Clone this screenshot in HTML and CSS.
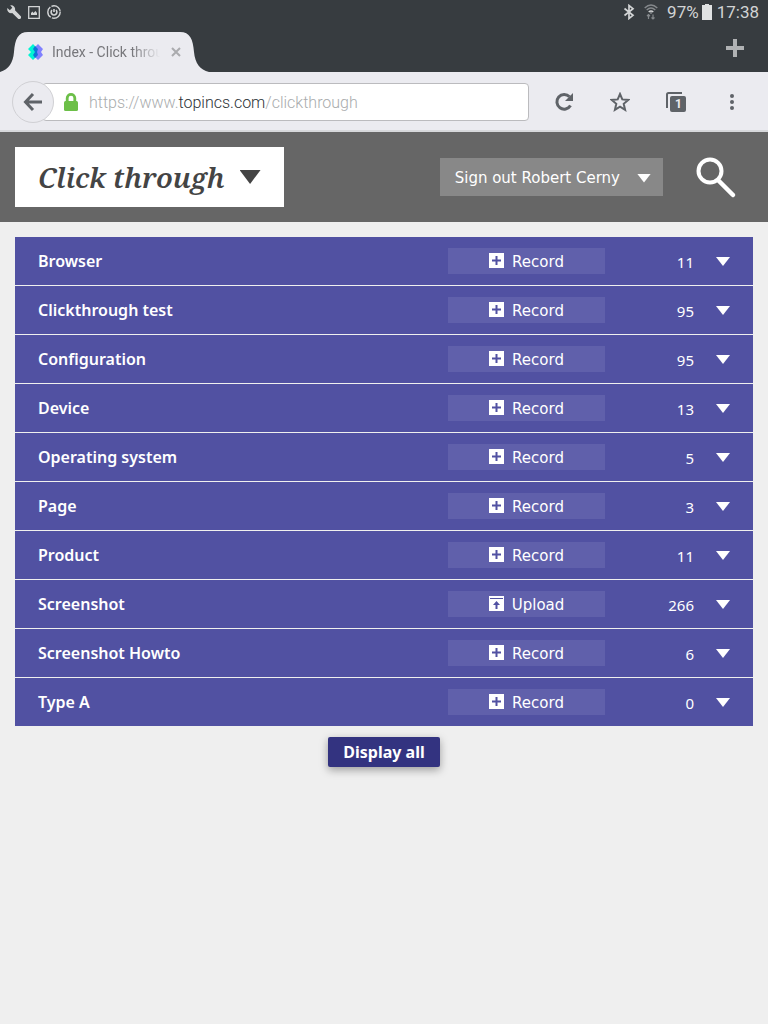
FILE: index.html
```
<!DOCTYPE html>
<html lang="en">
<head>
    <meta charset="UTF-8">
    <meta name="viewport" content="width=device-width, initial-scale=1.0">
    <title>Index - Click through</title>
    <link rel="stylesheet" href="styles.css">
</head>
<body>
    <div class="browser">
        <div class="status-bar">
            <div class="status-left">
                <svg width="14" height="14" viewBox="0 0 14 14"><path fill="#d2d4d5" d="M3.2 0.3A4 4 0 0 1 8 5.2L13.6 10.9A1.9 1.9 0 0 1 10.9 13.6L5.2 8A4 4 0 0 1 0.4 3L2.8 5.3L5.3 2.8Z"/></svg>
                <svg width="12" height="13" viewBox="0 0 12 13"><path fill="none" stroke="#d2d4d5" stroke-width="1.3" d="M.7 .7H11.3V12.3H.7Z"/><path fill="#d2d4d5" d="M3 9V7L4.5 5.5L5.5 7L7.5 5L9 7V9Z"/></svg>
                <svg width="14" height="14" viewBox="0 0 14 14" fill="none" stroke="#d2d4d5"><circle cx="7" cy="7" r="6.2" stroke-width="1.4" stroke-dasharray="11.7 1.2"/><path stroke-width="1.6" d="M5 5A2.9 2.9 0 1 0 9 5M7 4V7"/></svg>
            </div>
            <div class="status-right">
                <svg width="12" height="16" viewBox="0 0 12 16"><path fill="none" stroke="#d2d4d5" stroke-width="1.7" d="M1.5 4.5L10 11.3L6 14.5V1.5L10 4.7L1.5 11.5"/></svg>
                <svg class="wifi" width="14" height="16" viewBox="0 0 14 16" fill="none" stroke="#85898c" stroke-width="1.4"><path d="M.7 4Q7-2 13.3 4M2.7 6Q7 2 11.3 6"/><path stroke="#d2d4d5" d="M4.7 8Q7 5.8 9.3 8"/><path fill="#d2d4d5" stroke="none" d="M6 8.6H8L7 10Z"/><path stroke-width="1.2" d="M4.5 15V10.5M3 12L4.5 10.5L6 12M9 10.5V15M7.5 13.5L9 15L10.5 13.5"/></svg>
                <span>97%</span>
                <svg class="battery" width="10" height="16" viewBox="0 0 10 16"><path fill="#e0e2e3" d="M3 0H7V1H10V16H0V1H3Z"/></svg>
                <span>17:38</span>
            </div>
        </div>
        <div class="tab-bar">
            <div class="tab">
                <svg class="tab-shape" width="210" height="40" viewBox="0 0 210 40"><path fill="#ebebf0" d="M0 40C9 37 13 31 14 20C15 7 18 0 28 0H180C190 0 193 7 194 20C195 31 200 38 209 40Z"/></svg>
                <svg class="favicon" width="16" height="16" viewBox="0 0 16 16"><path fill="#00f5d4" d="M5 0L8 3L10 5L9 8L10 11L5 16L0 11L3 8L0 5Z"/><path fill="#8080ff" d="M10 0L15 5L13 8L15 11L10 16L7 13V3Z"/><path fill="#0f75d9" d="M7 2L10 5L9 8L10 11L7 14L5 11L7 8L5 5Z"/></svg>
                <span class="tab-title">Index - Click through</span>
                <button class="tab-close" aria-label="Close tab"><svg width="10" height="10" viewBox="0 0 10 10"><path stroke="#aaabae" stroke-width="2" d="M1 1L9 9M9 1L1 9"/></svg></button>
            </div>
            <button class="new-tab" aria-label="New tab"><svg width="18" height="18" viewBox="0 0 18 18"><path stroke="#b0b2b4" stroke-width="4" d="M0 9H18M9 0V18"/></svg></button>
        </div>
        <div class="toolbar">
            <button class="back" aria-label="Back"><svg width="20" height="20" viewBox="0 0 20 20"><path fill="none" stroke="#5f6368" stroke-width="3" d="M10 2L2.5 10L10 18M2.5 10H19"/></svg></button>
            <div class="url-bar">
                <svg class="lock" width="14" height="18" viewBox="0 0 14 18"><rect y="8" width="14" height="10" rx="1.5" fill="#6cbf48"/><path fill="none" stroke="#6cbf48" stroke-width="2.8" d="M3.2 9V5A3.8 3.6 0 0 1 10.8 5V9"/></svg>
                <input type="text" class="url-input" aria-label="Address">
                <div class="url-text">https://www.<span>topincs.com</span>/clickthrough</div>
            </div>
            <button class="tool" aria-label="Reload"><svg width="20" height="20" viewBox="0 0 20 20"><path fill="none" stroke="#5f6368" stroke-width="3" d="M16.5 13.5A7.3 7.3 0 1 1 15.5 4.8"/><path fill="#5f6368" d="M19 1V9H11Z"/></svg></button>
            <button class="tool" aria-label="Bookmark"><svg width="20" height="20" viewBox="0 0 20 20"><path fill="none" stroke="#5f6368" stroke-width="2" d="M10 2L12.3 7.4L18.2 7.9L13.7 11.8L15.1 17.8L10 14.6L4.9 17.8L6.3 11.8L1.8 7.9L7.7 7.4Z"/></svg></button>
            <button class="tool tabs-button" aria-label="Tabs"><svg width="20" height="20" viewBox="0 0 20 20"><path fill="none" stroke="#5f6368" stroke-width="2" d="M1 16V2.5Q1 1 2.5 1H16"/><rect x="4" y="4" width="16" height="16" rx="2" fill="#5f6368"/></svg><span>1</span></button>
            <button class="tool" aria-label="Menu"><svg width="20" height="20" viewBox="0 0 20 20" fill="#5f6368"><circle cx="10" cy="4" r="2"/><circle cx="10" cy="10" r="2"/><circle cx="10" cy="16" r="2"/></svg></button>
        </div>
    </div>

    <header>
        <button class="store-menu">Click through <span class="arrow"></span></button>
        <button class="user-menu">Sign out Robert Cerny <span class="arrow"></span></button>
        <button class="search" aria-label="Search"><svg width="42" height="42" viewBox="0 0 42 42" fill="none" stroke="#fff"><circle cx="15" cy="14" r="11.5" stroke-width="4"/><path stroke-width="4.5" stroke-linecap="round" d="M24 24L38 38"/></svg></button>
    </header>

    <main>
        <ul class="topics" id="topics"></ul>
        <button class="display-all">Display all</button>
    </main>

    <script>
        const topics = [
            { name: 'Browser', count: 11 },
            { name: 'Clickthrough test', count: 95 },
            { name: 'Configuration', count: 95 },
            { name: 'Device', count: 13 },
            { name: 'Operating system', count: 5 },
            { name: 'Page', count: 3 },
            { name: 'Product', count: 11 },
            { name: 'Screenshot', count: 266, upload: true },
            { name: 'Screenshot Howto', count: 6 },
            { name: 'Type A', count: 0 }
        ];

        const recordIcon = '<path fill="#fff" d="M0 0H15V15H0Z"/><path stroke="#5151a2" stroke-width="2" d="M3 7.5H12M7.5 3V12"/>';
        const uploadIcon = '<path fill="#fff" d="M0 0H15V15H0Z"/><path stroke="#5151a2" d="M1 2.5H14"/><path fill="#5151a2" d="M7.5 5L11 9H8.5V13H6.5V9H4Z"/>';

        document.getElementById('topics').innerHTML = topics.map(topic => `
            <li class="topic">
                <a class="topic-name" href="#">${topic.name}</a>
                <button class="action">
                    <svg width="15" height="15" viewBox="0 0 15 15">${topic.upload ? uploadIcon : recordIcon}</svg>
                    ${topic.upload ? 'Upload' : 'Record'}
                </button>
                <span class="count">${topic.count}</span>
                <button class="toggle" aria-label="Show ${topic.name}"><span class="arrow"></span></button>
            </li>
        `).join('');
    </script>
</body>
</html>
```
FILE: styles.css
```
* {
    box-sizing: border-box;
}

body {
    margin: 0;
    background-color: #efefef;
    font-family: "DejaVu Sans", Verdana, sans-serif;
    font-size: 15px;
}

button {
    display: flex;
    align-items: center;
    justify-content: center;
    padding: 0;
    border: none;
    background: none;
    color: inherit;
    font: inherit;
    cursor: pointer;
}

svg {
    display: block;
    flex: none;
}

.arrow {
    width: 14px;
    height: 9px;
    background-color: currentColor;
    clip-path: polygon(0 0, 100% 0, 50% 100%);
}

/* Browser */

.browser {
    font-family: Roboto, sans-serif;
}

.status-bar {
    display: flex;
    justify-content: space-between;
    height: 24px;
    padding: 0 9px 0 7px;
    background-color: #373c40;
    color: #d2d4d5;
    font-size: 17px;
}

.status-left,
.status-right {
    display: flex;
    align-items: center;
}

.status-left {
    gap: 7px;
}

.wifi {
    margin: 0 9px;
}

.battery {
    margin: 0 5px 0 3px;
}

.tab-bar {
    display: flex;
    align-items: flex-end;
    justify-content: space-between;
    height: 48px;
    padding-right: 24px;
    background-color: #373c40;
}

.tab {
    position: relative;
    display: flex;
    align-items: center;
    width: 210px;
    height: 40px;
    padding-left: 28px;
}

.tab-shape {
    position: absolute;
    left: 0;
    top: 0;
}

.favicon,
.tab-title,
.tab-close {
    position: relative;
}

.tab-title {
    width: 108px;
    margin: 0 11px 0 8px;
    overflow: hidden;
    white-space: nowrap;
    color: #77777b;
    font-size: 14px;
    -webkit-mask-image: linear-gradient(to right, #000 80px, transparent);
    mask-image: linear-gradient(to right, #000 80px, transparent);
}

.new-tab {
    height: 48px;
}

.toolbar {
    display: flex;
    align-items: center;
    height: 60px;
    padding: 2px 8px 0 12px;
    background-color: #ebebf0;
    border-bottom: 2px solid #d7d8db;
}

.back {
    position: relative;
    z-index: 1;
    flex: none;
    width: 42px;
    height: 42px;
    border: 1px solid #d0d0d4;
    border-radius: 50%;
    background-color: #ebebf0;
}

.url-bar {
    position: relative;
    flex: 1;
    display: flex;
    align-items: center;
    height: 38px;
    margin: 0 7px 0 -12px;
    padding-left: 21px;
    background-color: #fff;
    border: 1px solid #bbbbbe;
    border-radius: 4px;
}

.lock {
    margin-right: 10px;
}

.url-input {
    flex: 1;
    min-width: 0;
    height: 32px;
    padding: 0;
    border: none;
    outline: none;
    background: none;
    font: 16px Roboto, sans-serif;
}

.url-text {
    position: absolute;
    left: 46px;
    color: #a9acad;
    font-size: 16px;
    font-weight: 300;
    pointer-events: none;
}

.url-text span {
    color: #2c3236;
}

.tool {
    width: 56px;
    height: 56px;
}

.tabs-button {
    position: relative;
}

.tabs-button span {
    position: absolute;
    left: 27px;
    top: 22px;
    color: #ebebf0;
    font-size: 12px;
    font-weight: 700;
    line-height: 16px;
}

/* Page */

header {
    display: flex;
    align-items: center;
    height: 90px;
    padding: 0 31px 0 15px;
    background-color: #666;
}

.store-menu {
    gap: 15px;
    height: 60px;
    padding: 0 23px;
    background-color: #fff;
    color: #444;
    font-family: "Noto Serif", "Droid Serif", "DejaVu Serif Condensed", serif;
    font-size: 28px;
    font-style: italic;
    font-weight: 600;
}

.store-menu .arrow {
    width: 21px;
    height: 14px;
}

.user-menu {
    gap: 17px;
    height: 38px;
    margin-left: auto;
    padding: 2px 12px 0 15px;
    background-color: #888;
    color: #fff;
}

.search {
    margin-left: 32px;
    padding-top: 2px;
}

main {
    padding: 15px;
}

.topics {
    display: grid;
    gap: 1px;
    margin: 0 0 11px;
    padding: 0;
    list-style: none;
}

.topic {
    display: grid;
    grid-template-columns: 1fr 157px 89px 36px;
    align-items: center;
    height: 48px;
    padding: 0 23px;
    background-color: #5151a2;
    color: #fff;
}

.topic-name {
    color: inherit;
    font-family: "Noto Sans", sans-serif;
    font-size: 16px;
    font-weight: 600;
    text-decoration: none;
}

.action {
    gap: 8px;
    height: 26px;
    padding-top: 2px;
    background-color: #6060ab;
}

.action svg {
    margin-bottom: 4px;
}

.count {
    padding-top: 2px;
    font-family: "Noto Sans", sans-serif;
    text-align: right;
}

.toggle {
    justify-content: flex-end;
    height: 48px;
    padding-top: 1px;
}

.display-all {
    height: 30px;
    margin: 0 auto;
    padding: 0 15px;
    border-radius: 2px;
    background-color: #333380;
    box-shadow: 0 3px 8px rgba(0, 0, 0, 0.35);
    color: #fff;
    font-family: "Noto Sans", sans-serif;
    font-size: 16px;
    font-weight: 700;
}
```
